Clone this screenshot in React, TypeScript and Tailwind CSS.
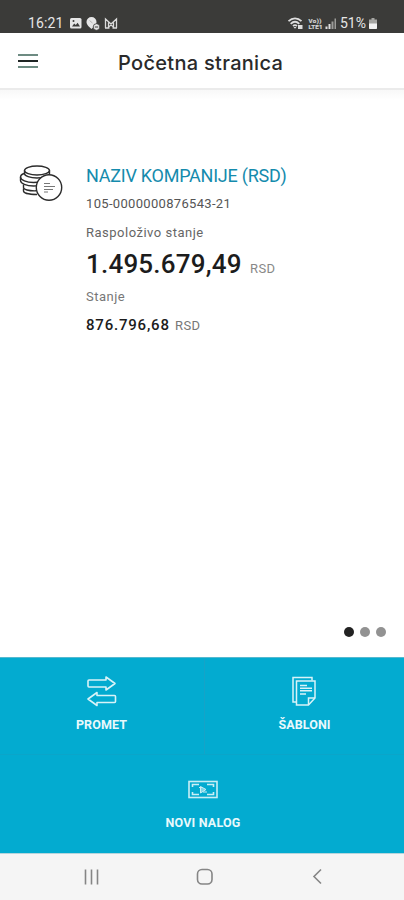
function StatusBar() {
  return (
    <div className="flex h-[33px] items-end justify-between bg-[#3b3b39] pr-[25px] pb-[2px] pl-[28px] text-[#e6e6e6]">
      <div className="flex items-center">
        <span className="w-[35px] text-[14px] leading-[15px] tracking-[0.1px] whitespace-nowrap">16:21</span>
        <svg className="ml-[6px]" width="50" height="16" viewBox="0 0 50 16">
          <rect x="1" y="3" width="11.5" height="10.5" rx="1.5" fill="#e6e6e6" />
          <path d="M3 11.5l2.2-3 1.6 1.6 1.8-2.3 2.4 3.7z" fill="#3b3b39" />
          <circle cx="4.5" cy="6" r="1" fill="#3b3b39" />
          <path d="M22.500 2a5 5 0 0 1 5 5c0 3-3 5-5 7-2-2-5-4-5-7a5 5 0 0 1 5-5z" fill="#e6e6e6" />
          <path d="M20.500 5.500l3 2.500" stroke="#b4b4b4" strokeWidth="1" />
          <circle cx="27.500" cy="12" r="3.3" fill="#e6e6e6" stroke="#3b3b39" strokeWidth="0.8" />
          <path d="M25.800 12h3.400" stroke="#3b3b39" />
          <path d="M36.500 13V4l5.500 5 5.500-5v9M39.500 13V7.500M44.500 13V7.500M36 13h4.500M43.500 13h4.500M39.500 12l2.500-2 2.500 2" fill="none" stroke="#dadada" strokeWidth="1.3" />
        </svg>
      </div>
      <div className="flex items-center">
        <svg width="52" height="16" viewBox="0 0 52 16">
          <g fill="none" stroke="#dedede" strokeWidth="1.8">
            <path d="M.5 6.200c3.800-3.800 9.200-3.800 13 0" />
            <path d="M2.700 8.800c2.600-2.500 6-2.500 8.600 0" />
            <path d="M5 11c1.400-1.200 2.600-1.200 4 0" />
          </g>
          <path d="M5.500 12L7 13.700 8.500 12zM10 10h4.500v4H10z" fill="#dedede" />
          <g fill="#d4d4d4" stroke="#d4d4d4" strokeWidth="0.2" fontSize="6.2" fontWeight="700">
            <text x="20.500" y="7.500" textLength="13">Vo))</text>
            <text x="20.500" y="14" textLength="14">LTE1</text>
          </g>
          <path d="M37.500 11.500h2V14h-2zM40.500 9h2v5h-2z" fill="#dedede" />
          <path d="M43.500 6.500h2V14h-2zM46.500 3.500h1.500V14h-1.500z" fill="#9b9b98" />
        </svg>
        <span className="w-[29px] text-[14px] leading-[15px] whitespace-nowrap">51%</span>
        <svg width="10" height="16" viewBox="0 0 10 16">
          <path d="M2.500 3h3v1.500h2.500V13a1 1 0 0 1-1 1H1a1 1 0 0 1-1-1V4.500h2.500z" fill="#a5a5a2" />
          <path d="M0 8.500h8V13a1 1 0 0 1-1 1H1a1 1 0 0 1-1-1z" fill="#f2f2f2" />
        </svg>
      </div>
    </div>
  )
}

function Header() {
  return (
    <header className="flex h-[55px] items-center bg-white pl-[18px]">
      <div className="flex w-[20px] flex-col gap-[4px]">
        <div className="h-[2px] bg-[#6d8b82]"></div>
        <div className="h-[2px] bg-[#1f2524]"></div>
        <div className="h-[2px] bg-[#6d8b82]"></div>
      </div>
      <h1 className="ml-[80px] pt-[4px] font-['Inter',sans-serif] text-[20px] font-medium tracking-[0.3px] whitespace-nowrap text-[#2a2a2a]">
        Početna stranica
      </h1>
    </header>
  )
}

function CoinsIcon() {
  return (
    <svg className="mt-[14px] shrink-0" width="44" height="38" viewBox="0 0 44 38" fill="none" stroke="#2c2c2c" strokeWidth="1.4">
      <ellipse cx="18" cy="6.500" rx="12.500" ry="4.500" />
      <path d="M5.500 6.500v3c0 2.500 5.500 4.500 12.500 4.500s12.500-2 12.500-4.500v-3" />
      <path d="M5 9.500c-2.500 1-3.500 2-3.500 3.500 0 3 6 5.500 13 5.500 3 0 5-.3 7-1" />
      <path d="M1.500 13v3.500c0 3 6 5.500 13 5.500 2 0 4-.2 5-.4" />
      <path d="M4.500 20.500v3c0 2 5 3.600 13 3.300" />
      <path d="M4.500 24.500v2.500c0 2 5.500 3.500 13.500 3.500" />
      <circle cx="30" cy="23.500" r="12.700" fill="#fff" />
      <path d="M25 19.500h6M25 22.500h11M25 25.500h9M25 28h4" stroke="#777" strokeWidth="1" />
    </svg>
  )
}

function Account() {
  return (
    <section className="flex h-[200px] pl-[19px] text-[#555]">
      <CoinsIcon />
      <div className="ml-[23px] whitespace-nowrap">
        <h2 className="mt-[15px] text-[18px] leading-[22px] tracking-[-0.25px] text-[#158bad]">NAZIV KOMPANIJE (RSD)</h2>
        <div className="mt-[9px] text-[13px] leading-[16px] tracking-[0.32px]">105-0000000876543-21</div>
        <div className="mt-[13px] text-[13px] leading-[16px] tracking-[0.5px] text-[#666]">Raspoloživo stanje</div>
        <div className="mt-[7px] flex items-baseline leading-[32px]">
          <span className="w-[164px] text-[26px] font-medium tracking-[0.2px] text-[#1c1c1c]">1.495.679,49</span>
          <span className="text-[13px] tracking-[0.4px] text-[#888]">RSD</span>
        </div>
        <div className="mt-[4px] text-[13px] leading-[16px] tracking-[0.5px] text-[#777]">Stanje</div>
        <div className="mt-[11px] flex items-baseline leading-[18px]">
          <span className="w-[89px] text-[15px] font-medium tracking-[0.8px] text-[#1c1c1c]">876.796,68</span>
          <span className="text-[13px] tracking-[0.4px] text-[#777]">RSD</span>
        </div>
      </div>
    </section>
  )
}

function ArrowsIcon() {
  return (
    <svg width="32" height="32" viewBox="0 0 32 32" fill="none" stroke="#d9f3f8" strokeWidth="1.6" strokeLinejoin="round">
      <path d="M3 5h17V2l9 6.500-9 6.500v-3H3a1 1 0 0 1-1-1V6a1 1 0 0 1 1-1z" />
      <path d="M28.500 20.500H11v-3L2 24l9 6.500v-3h17.500a1 1 0 0 0 1-1v-5a1 1 0 0 0-1-1z" />
    </svg>
  )
}

function TemplatesIcon() {
  return (
    <svg width="32" height="32" viewBox="0 0 32 32" fill="none" stroke="#d9f3f8" strokeWidth="1.5">
      <path d="M7 27H4V2.500h19v3" />
      <path d="M7.500 6H26v17l-6.500 7h-12z" />
      <path d="M19.500 30v-7H26" />
      <path d="M11 10.500h7M11 13.300h12M11 15.700h12M11 19h6" />
    </svg>
  )
}

function BanknoteIcon() {
  return (
    <svg width="32" height="32" viewBox="0 0 32 32" fill="none" stroke="#c9eef5" strokeWidth="1.6">
      <rect x="2" y="8.500" width="28" height="16" />
      <path d="M5.500 14v-2.500H12M20 11.500h6.500V14M26.500 19v2.500H20M12 21.500H5.500V19" />
      <path d="M13.500 13.500l5.500 3-5.500 3.500zM12 14.500h3M16 19h4" fill="#7fd5e6" strokeWidth="1" />
    </svg>
  )
}

function Actions() {
  return (
    <div className="h-[196px] border-t border-[#55b9cf] bg-[#03abd0] text-[12.5px] leading-[14px] font-bold text-[#e9f9fc]">
      <div className="grid h-[97px] grid-cols-[205px_199px] border-b border-[#0ba5c9]">
        <div className="flex flex-col items-center border-r border-[#16a3c7] pt-[17px] pr-px">
          <ArrowsIcon />
          <span className="mt-[11px] tracking-[0.1px]">PROMET</span>
        </div>
        <div className="flex flex-col items-center pt-[17px]">
          <TemplatesIcon />
          <span className="mt-[11px] tracking-[0.1px]">ŠABLONI</span>
        </div>
      </div>
      <div className="flex flex-col items-center pt-[18px] pl-[2px]">
        <BanknoteIcon />
        <span className="mt-[11px] tracking-[0.2px]">NOVI NALOG</span>
      </div>
    </div>
  )
}

function NavigationBar() {
  return (
    <div className="flex h-[47px] items-center justify-between border-t border-[#b5d5dc] bg-[#f5f5f5] pr-[79px] pl-[80px]">
      <svg width="24" height="20" viewBox="0 0 24 20" stroke="#858585" strokeWidth="1.6">
        <path d="M5.500 2.500v15M11.500 2.500v15M17.500 2.500v15" />
      </svg>
      <svg width="20" height="20" viewBox="0 0 20 20" fill="none" stroke="#858585" strokeWidth="1.6">
        <rect x="2.500" y="2.500" width="14.500" height="14.500" rx="4.500" />
      </svg>
      <svg width="20" height="20" viewBox="0 0 20 20" fill="none" stroke="#858585" strokeWidth="1.6">
        <path d="M16 2.500L9 9.500l7 7" />
      </svg>
    </div>
  )
}

export default function App() {
  return (
    <div className="flex h-[900px] w-[404px] flex-col overflow-hidden bg-white font-['Roboto','Liberation_Sans',sans-serif]">
      <StatusBar />
      <Header />
      <main className="flex grow flex-col">
        <div className="h-[12px] border-t-2 border-[#ebebeb] bg-linear-to-b from-[#f8f8f8] to-white"></div>
        <div className="mt-[50px]">
          <Account />
        </div>
        <div className="mt-auto mb-[20px] flex justify-end gap-[6px] pr-[18px]">
          <div className="size-[10px] rounded-full bg-[#222]"></div>
          <div className="size-[10px] rounded-full bg-[#929292]"></div>
          <div className="size-[10px] rounded-full bg-[#929292]"></div>
        </div>
      </main>
      <Actions />
      <NavigationBar />
    </div>
  )
}
